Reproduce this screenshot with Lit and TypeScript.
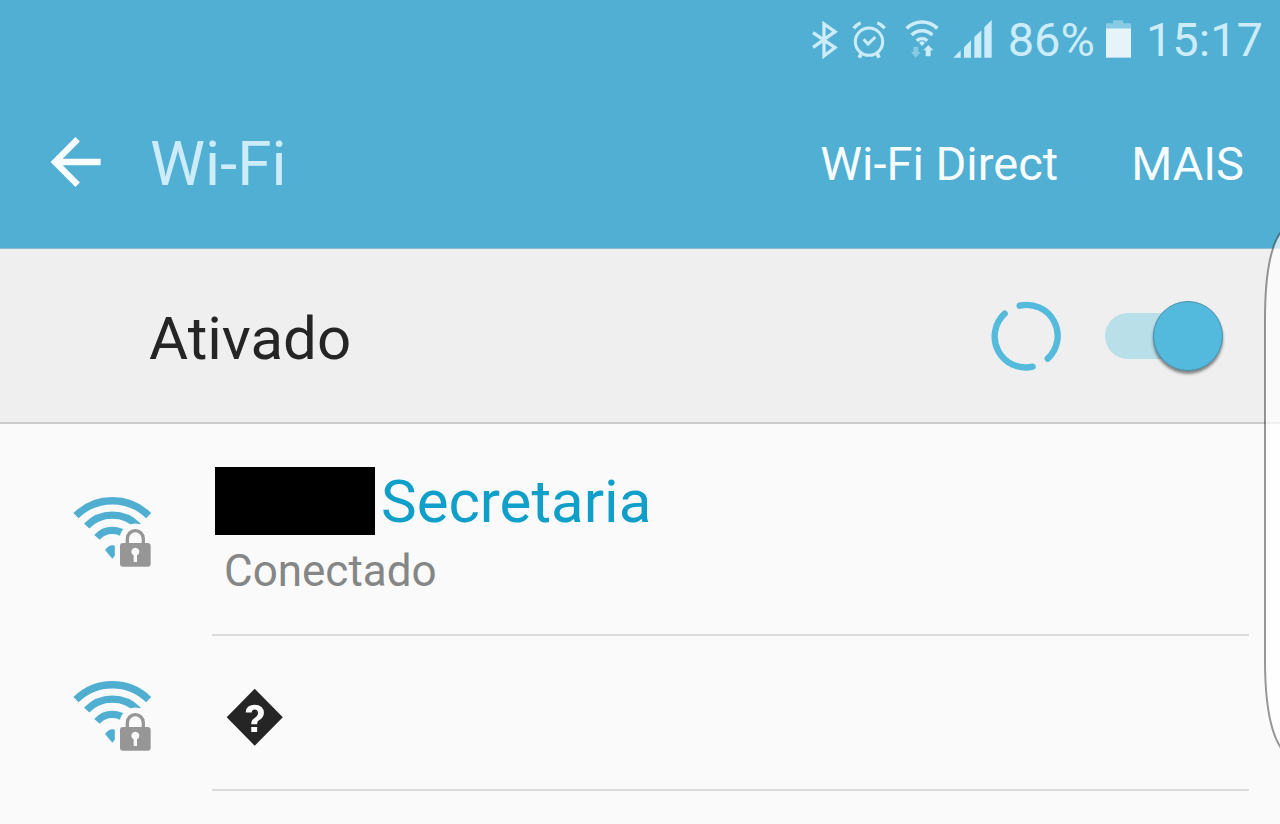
import { LitElement, html, css, nothing } from "lit";
import { customElement, property, state } from "lit/decorators.js";

interface Network {
  name: string;
  status?: string;
  redacted?: boolean;
  connected?: boolean;
}

@customElement("status-bar")
class StatusBar extends LitElement {
  static styles = css`
    :host {
      display: flex;
      align-items: center;
      justify-content: flex-end;
      box-sizing: border-box;
      height: 80px;
      padding-right: 17px;
      color: #cdecf9;
      font-size: 47px;
      line-height: 56px;
    }
    svg {
      display: block;
      flex: none;
      fill: currentColor;
    }
    .line {
      fill: none;
      stroke: currentColor;
    }
    .icons {
      display: flex;
      gap: 12px;
      margin-right: 15px;
    }
    .battery {
      margin: 0 14px 0 10px;
    }
    .charge {
      fill: #e6f4f8;
    }
    .dim {
      opacity: 0.45;
    }
  `;

  render() {
    return html`
      <div class="icons">
        <svg width="28" height="40" viewBox="34 25 84 120" role="img" aria-label="Bluetooth">
          <path class="line" stroke-width="10" d="M40 63 L106 108 L73 133 V37 L106 60 L40 107" />
        </svg>
        <svg width="36" height="40" viewBox="152 25 108 120" role="img" aria-label="Alarme">
          <g class="line" stroke-width="9">
            <circle cx="206" cy="90" r="41" />
            <path d="M190 83 L203 97 L225 76" />
            <path d="M160 50 Q168 39 181 33 M231 33 Q245 39 253 50" stroke-width="10" />
            <path d="M184 122 L177 138 M229 122 L236 138" stroke-width="11" />
          </g>
        </svg>
        <svg width="42" height="40" viewBox="303 25 126 120" role="img" aria-label="Wi-Fi">
          <g class="line" stroke-width="11">
            <path d="M326 50 A65 65 0 0 1 418 50" />
            <path d="M341 70 A44 44 0 0 1 403 70" />
            <path d="M356 87 A24 24 0 0 1 388 87" stroke-width="10" />
          </g>
          <path d="M363 93 Q372 84 381 93 L372 103Z" />
          <path class="dim" d="M346 105 H361 V121 H368 L353 138 L339 121 H346Z" />
          <path d="M391 100 L406 116 H398 V134 H383 V116 H376Z" />
        </svg>
        <svg width="40" height="40" viewBox="457 25 120 120" role="img" aria-label="Sinal">
          <path d="M458 138 L480 116 V138Z M490 107 L511 86 V138 H490Z M521 76 L542 56 V138 H521Z M551 47 L573 25 V138 H551Z" />
        </svg>
      </div>
      <span>86%</span>
      <svg class="battery" width="27" height="40" viewBox="342 28 81 120" role="img" aria-label="Bateria">
        <path class="dim" d="M345 38 H366 V29 H396 V38 H420 V53 H345Z" />
        <path class="charge" d="M345 53 H420 V141 H345Z" />
      </svg>
      <time>15:17</time>
    `;
  }
}

@customElement("network-row")
class NetworkRow extends LitElement {
  @property({ attribute: false }) network!: Network;

  static styles = css`
    :host {
      display: flex;
      align-items: center;
      padding: 0 31px 0 73px;
    }
    .signal {
      flex: none;
      display: block;
      margin-top: 4px;
      fill: #50afd1;
    }
    .arc {
      fill: none;
      stroke: #50afd1;
      stroke-width: 22px;
    }
    .halo {
      fill: #fafafa;
      stroke: #fafafa;
    }
    .shackle {
      fill: none;
      stroke: #969696;
      stroke-width: 10px;
    }
    .lock {
      fill: #969696;
    }
    .keyhole {
      fill: #fafafa;
    }
    .body {
      flex: 1;
      display: flex;
      flex-direction: column;
      justify-content: center;
      box-sizing: border-box;
      min-height: 155px;
      margin-left: 60px;
      padding: 6px 0 0 12px;
      border-bottom: 2px solid #dadbdb;
    }
    .body.detailed {
      min-height: 212px;
      padding-top: 8px;
    }
    .name {
      display: flex;
      align-items: center;
      height: 68px;
      font-size: 60px;
      color: #252525;
    }
    .connected {
      color: #0f9fc9;
    }
    .redaction {
      width: 160px;
      height: 68px;
      margin: 0 6px 0 -9px;
      background: #000;
    }
    .status {
      margin-top: 8px;
      font-size: 44px;
      line-height: 56px;
      color: #858686;
    }
  `;

  render() {
    const n = this.network;
    return html`
      <svg class="signal" width="79" height="72" viewBox="39 50 237 216" role="img" aria-label="Rede protegida">
        <path class="arc" d="M48 109 A155 155 0 0 1 266 109" />
        <path class="arc" d="M80 140 A107 107 0 0 1 234 140" />
        <path class="arc" d="M111 174 A61 61 0 0 1 203 174" />
        <path d="M135 212 Q145 198 157 198 Q169 198 179 212 L157 238Z" />
        <circle class="halo" cx="226" cy="180" r="47" />
        <rect class="halo" x="165" y="184" width="120" height="90" />
        <path class="shackle" d="M202 196 V178 A24 24 0 0 1 250 178 V196" />
        <rect class="lock" x="180" y="191" width="92" height="71" rx="9" />
        <path class="keyhole" d="M221 228 A12 12 0 1 1 231 228 V248 H221Z" />
      </svg>
      <div class="body ${n.status ? "detailed" : ""}">
        <div class="name ${n.connected ? "connected" : ""}">
          ${n.redacted ? html`<span class="redaction"></span>` : nothing}
          <span>${n.name}</span>
        </div>
        ${n.status ? html`<div class="status">${n.status}</div>` : nothing}
      </div>
    `;
  }
}

@customElement("app-root")
class AppRoot extends LitElement {
  @state() private enabled = true;

  private networks: Network[] = [
    { name: "Secretaria", status: "Conectado", redacted: true, connected: true },
    { name: "\uFFFD" },
  ];

  static styles = css`
    :host {
      display: block;
      position: relative;
      min-height: 100vh;
      overflow: hidden;
      background: #fafafa;
      font-family: Roboto, sans-serif;
    }
    header {
      background: #50afd2;
    }
    .appbar {
      display: flex;
      align-items: center;
      box-sizing: border-box;
      height: 169px;
      padding: 0 36px 0 50px;
      border-bottom: 1px solid #8fbccb;
    }
    button {
      padding: 0;
      border: 0;
      background: none;
      color: #f7fdff;
      font-family: inherit;
      font-size: 47px;
      line-height: 56px;
    }
    .back {
      margin: 0 48px 4px 0;
    }
    .back svg {
      display: block;
      fill: none;
      stroke: currentColor;
      stroke-width: 19px;
    }
    h1 {
      margin: 0;
      flex: 1;
      font-size: 62px;
      line-height: 72px;
      font-weight: 400;
      color: #cdecf9;
    }
    .actions {
      display: flex;
      gap: 73px;
    }
    .toggle {
      display: flex;
      align-items: center;
      box-sizing: border-box;
      height: 175px;
      padding: 0 57px 0 149px;
      background: #efefef;
      border-bottom: 2px solid #cccccc;
    }
    label {
      flex: 1;
      padding-top: 6px;
      font-size: 60px;
      line-height: 70px;
      color: #252525;
    }
    .spinner {
      margin-right: 44px;
      fill: none;
      stroke: #54bbdd;
      stroke-width: 19px;
      stroke-linecap: round;
    }
    .switch {
      appearance: none;
      display: grid;
      align-items: center;
      width: 118px;
      height: 70px;
      margin: 0;
    }
    .switch::before,
    .switch::after {
      content: "";
      grid-area: 1 / 1;
    }
    .switch::before {
      width: 106px;
      height: 46px;
      border-radius: 23px;
      background: #b9dfe9;
    }
    .switch::after {
      box-sizing: border-box;
      width: 70px;
      height: 70px;
      border: 1px solid #4594ae;
      border-radius: 50%;
      background: #53b9dd;
      box-shadow: 0 3px 3px rgba(0, 0, 0, 0.45);
    }
    .switch:checked::after {
      justify-self: end;
    }
    ul {
      margin: 0;
      padding: 0;
      list-style: none;
    }
    .edge {
      position: absolute;
      top: 230px;
      right: 0;
      width: 17px;
      height: 520px;
    }
  `;

  render() {
    return html`
      <header>
        <status-bar></status-bar>
        <div class="appbar">
          <button class="back" aria-label="Voltar">
            <svg width="52" height="52" viewBox="57 47 156 156">
              <path d="M209 125 H72 M140 57 L72 125 L140 193" />
            </svg>
          </button>
          <h1>Wi-Fi</h1>
          <div class="actions">
            <button>Wi-Fi Direct</button>
            <button>MAIS</button>
          </div>
        </div>
      </header>
      <div class="toggle">
        <label for="wifi">Ativado</label>
        <svg class="spinner" width="70" height="70" viewBox="62 62 210 210" role="img" aria-label="Procurando">
          <path d="M148 76 A93 93 0 0 1 232 235 M187 259 A93 93 0 0 1 103 100" />
        </svg>
        <input
          id="wifi"
          class="switch"
          type="checkbox"
          role="switch"
          .checked=${this.enabled}
          @change=${(e: Event) => (this.enabled = (e.target as HTMLInputElement).checked)}
        />
      </div>
      <ul>
        ${this.networks.map((n) => html`<li><network-row .network=${n}></network-row></li>`)}
      </ul>
      <svg class="edge" viewBox="0 0 17 520" aria-hidden="true">
        <path
          d="M18 2 C6 18 2 50 2 90 V430 C2 470 6 500 18 518"
          fill="#fff"
          fill-opacity="0.7"
          stroke="#000"
          stroke-opacity="0.4"
          stroke-width="2"
        />
      </svg>
    `;
  }
}
